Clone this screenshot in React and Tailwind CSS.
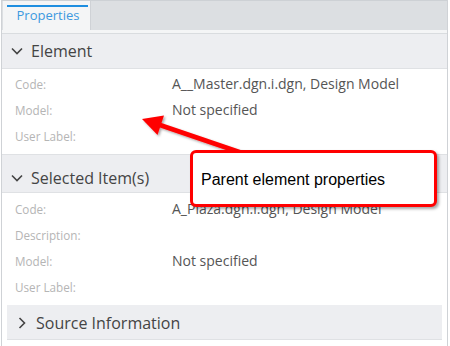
import React from "react";

// Properties panel with callout annotation

const ELEMENT_ROWS = [
  { label: "Code:", value: "A__Master.dgn.i.dgn, Design Model" },
  { label: "Model:", value: "Not specified" },
  { label: "User Label:", value: "" },
];

const SELECTED_ROWS = [
  { label: "Code:", value: "A_Plaza.dgn.i.dgn, Design Model" },
  { label: "Description:", value: "" },
  { label: "Model:", value: "Not specified" },
  { label: "User Label:", value: "" },
];

function ChevronDown() {
  return (
    <svg width="12" height="8" viewBox="0 0 12 8" className="shrink-0">
      <path d="M1 1.5 L6 6.5 L11 1.5" fill="none" stroke="#444" strokeWidth="1.6" />
    </svg>
  );
}

function ChevronRight() {
  return (
    <svg width="8" height="12" viewBox="0 0 8 12" className="shrink-0">
      <path d="M1.5 1 L6.5 6 L1.5 11" fill="none" stroke="#444" strokeWidth="1.6" />
    </svg>
  );
}

function Rows({ rows, top }) {
  return (
    <div className={top}>
      {rows.map((r, i) => (
        <div key={i} className="h-[26px] flex items-center">
          <div className="w-[170px] pl-[13px] pt-[2px] text-[11.7px] text-[#b5b5b5]">
            {r.label}
          </div>
          <div className="pb-[1px] text-[14px] text-[#555]">{r.value}</div>
        </div>
      ))}
    </div>
  );
}

export default function App() {
  return (
    <div className="w-[450px] h-[346px] bg-white relative overflow-hidden font-['Open_Sans',sans-serif]">
      <div className="ml-[1px] w-[447px] h-full border-x border-[#cfd2d6] flex flex-col">
        {/* tab bar */}
        <div className="h-[30px] bg-[#dcdfe2] border-t border-[#cdd1d5] flex">
          <div className="ml-[1px] w-[88px] bg-[#f4f5f6] border-r border-[#cfd2d6] relative flex items-center justify-center">
            <div className="absolute top-[4px] left-[4px] right-[2px] h-[2px] bg-[#1e8ee0]" />
            <span className="text-[13px] text-[#3c99e0] mt-[1px] ml-[3px]">Properties</span>
          </div>
        </div>
        <div className="h-[3px] bg-[#f4f5f6] border-b border-[#d9dcdf] box-content" />

        {/* Element */}
        <div className="h-[35px] bg-[#edeef1] flex items-center gap-[8px] pl-[9px] border-b border-[#dfe1e4]">
          <ChevronDown />
          <span className="text-[16px] text-[#444]">Element</span>
        </div>
        <Rows rows={ELEMENT_ROWS} top="pt-[2px] pb-[5px]" />

        {/* Selected Item(s) */}
        <div className="h-[39px] bg-[#edeef1] flex items-center gap-[8px] pl-[9px] pt-[9px] border-y border-[#dfe1e4]">
          <ChevronDown />
          <span className="text-[16px] text-[#444]">Selected Item(s)</span>
        </div>
        <Rows rows={SELECTED_ROWS} top="pt-[3px] pb-[4px]" />

        {/* Source Information */}
        <div className="mx-[5px] mt-[1px] h-[35px] bg-[#edeef1] flex items-center gap-[10px] pl-[11px] pt-[2px] border-b border-[#dfe1e4]">
          <ChevronRight />
          <span className="text-[16px] text-[#444]">Source Information</span>
        </div>
      </div>

      {/* callout arrow */}
      <svg className="absolute inset-0 pointer-events-none" width="450" height="346">
        <defs>
          <filter id="sh" x="-20%" y="-20%" width="140%" height="140%">
            <feDropShadow dx="1.5" dy="1.5" stdDeviation="1" floodColor="#000" floodOpacity="0.35" />
          </filter>
        </defs>
        <g filter="url(#sh)">
          <line x1="157" y1="124" x2="245" y2="154" stroke="#ff0000" strokeWidth="5" />
          <polygon points="142,119 164,115.5 157.5,135" fill="#ff0000" />
        </g>
      </svg>

      {/* callout box */}
      <div className="absolute left-[190px] top-[150px] w-[247px] h-[57px] bg-white border-[3px] border-[#ff0000] rounded-[6px] shadow-[2px_2px_3px_rgba(0,0,0,0.35)] flex items-center pl-[8px] pt-[2px]">
        <span className="font-['Liberation_Sans',Arial,sans-serif] text-[16px] text-black">
          Parent element properties
        </span>
      </div>
    </div>
  );
}
